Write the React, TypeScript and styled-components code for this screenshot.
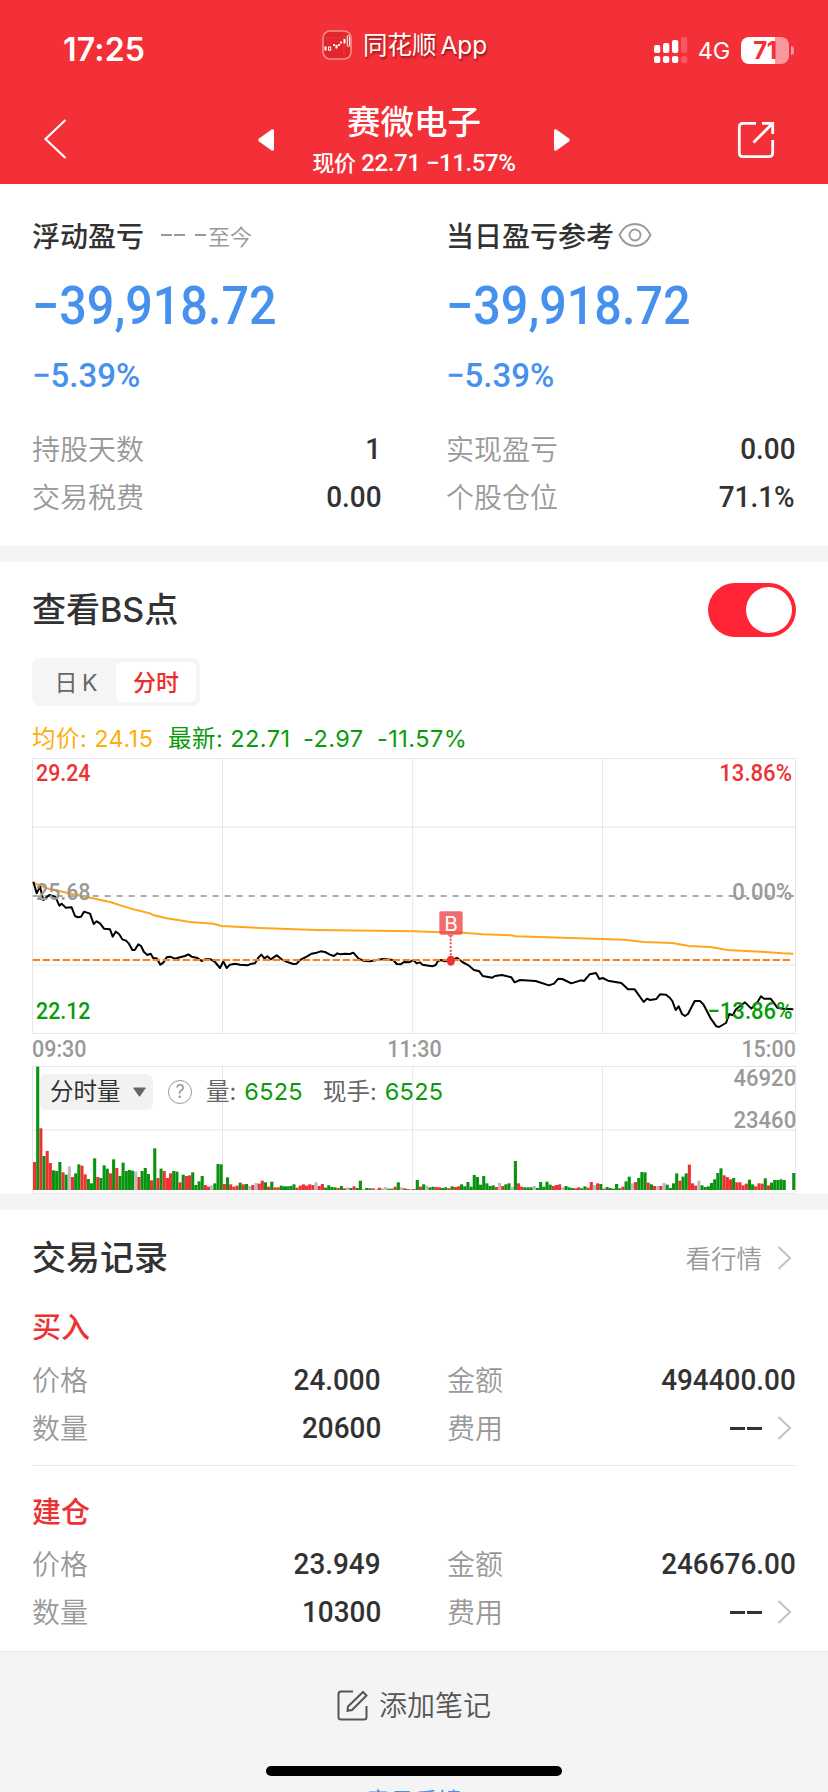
import React from 'react';
import styled, { createGlobalStyle, css } from 'styled-components';

const CJK = "'Noto Sans CJK SC', sans-serif";
const NUM = `Roboto, ${CJK}`;
const UI = `Inter, ${CJK}`;

const color = {
  brand: '#f33037',
  red: '#ec3232',
  green: '#0a9b0a',
  blue: '#4691ee',
  orange: '#ffa61a',
  ink: '#323232',
  mute: '#999999',
  line: '#e6e6e6',
  band: '#f4f4f4',
};

const GlobalStyle = createGlobalStyle`
  * { box-sizing: border-box; }
  body { margin: 0; background: #fff; overflow: hidden; }
`;

const Screen = styled.div`
  width: 828px;
  height: 1792px;
  overflow: hidden;
  position: relative;
  background: #fff;
  color: ${color.ink};
  font-family: ${CJK};
  display: flex;
  flex-direction: column;
  white-space: nowrap;
  line-height: 1;
`;

/* ---------- header ---------- */

const Header = styled.header`
  height: 184px;
  flex: none;
  background: ${color.brand};
  color: #fff;
`;

const StatusBar = styled.div`
  height: 96px;
  display: grid;
  grid-template-columns: 259px auto 1fr;
  padding: 0 34px 0 63px;
`;

const Clock = styled.div`
  font: 600 32px/100px ${UI};
  letter-spacing: 0.2px;
`;

const AppTag = styled.div`
  height: 90px;
  display: flex;
  align-items: center;
  gap: 11px;
  font: 400 24.5px/1 ${UI};
  text-shadow: 1px 2px 2px rgba(90, 0, 0, 0.6);
  word-spacing: -3px;
`;

const Signals = styled.div`
  height: 100px;
  display: flex;
  align-items: center;
  justify-content: flex-end;
`;

const Network = styled.span`
  font: 400 23.5px/1 ${UI};
  margin: 2px 11px 0 10px;
  letter-spacing: -0.2px;
`;

const Battery = styled.div`
  width: 48px;
  height: 27px;
  border-radius: 8px;
  background: linear-gradient(90deg, #fff 34px, #f9989b 34px);
  color: ${color.brand};
  font: 700 24px/27px ${UI};
  text-align: center;
  letter-spacing: -0.5px;
`;

const BatteryNub = styled.div`
  width: 3px;
  height: 9px;
  margin-left: 2px;
  border-radius: 0 4px 4px 0;
  background: #f9989b;
`;

const NavBar = styled.div`
  height: 88px;
  display: grid;
  grid-template-columns: 215px 16px 280px 16px 1fr;
  align-items: center;
  padding: 0 53px 0 43px;
`;

const NavIcon = styled.svg<{ $end?: boolean }>`
  display: block;
  justify-self: ${(p) => (p.$end ? 'end' : 'start')};
  fill: none;
  stroke: #fff;
`;

const Arrow = styled.svg`
  display: block;
  fill: #fff;
`;

const NavTitle = styled.div`
  text-align: center;
  padding-bottom: 4px;
`;

const StockName = styled.h1`
  margin: 0 0 4px;
  font: 500 33.5px/46px ${CJK};
`;

const StockQuote = styled.div`
  font: 500 24px/32px ${NUM};
  letter-spacing: -0.4px;
  span {
    font-size: 22px;
  }
`;

/* ---------- profit summary ---------- */

const Summary = styled.section`
  height: 362px;
  flex: none;
  padding: 29px 32px 0;
  display: grid;
  grid-template-columns: 349px 349px;
  column-gap: 65px;
`;

const CardHead = styled.div`
  height: 44px;
  display: flex;
  align-items: center;
  font-size: 28px;
  font-weight: 500;
`;

const Since = styled.span`
  margin-left: 17px;
  font: 350 22px/1 ${CJK};
  color: ${color.mute};
  display: flex;
  align-items: center;
`;

const Dash = styled.i<{ $w: number; $gap?: number; $h?: number; $c?: string }>`
  display: inline-block;
  width: ${(p) => p.$w}px;
  height: ${(p) => p.$h ?? 1.5}px;
  margin-right: ${(p) => p.$gap ?? 2}px;
  background: ${(p) => p.$c ?? color.mute};
`;

const Profit = styled.div`
  height: 98px;
  font: 500 53px/99px ${NUM};
  transform: scaleX(0.915);
  transform-origin: left;
  color: ${color.blue};
`;

const Rate = styled.div`
  height: 40px;
  font: 500 34px/40px ${NUM};
  transform: scaleX(0.97);
  transform-origin: left;
  color: ${color.blue};
`;

const Rows = styled.div`
  margin-top: 30px;
`;

const Row = styled.div`
  height: 48px;
  display: flex;
  align-items: center;
  justify-content: space-between;
`;

const Label = styled.span`
  font: 350 28px/46px ${CJK};
  height: 48px;
  color: ${color.mute};
`;

const Value = styled.span`
  display: flex;
  align-items: center;
`;

const Figure = styled.span`
  font: 500 30px/48px ${NUM};
  transform: scaleX(0.93);
  transform-origin: right;
`;

const Band = styled.div`
  height: 16px;
  flex: none;
  background: ${color.band};
`;

/* ---------- chart ---------- */

const ChartSection = styled.section`
  height: 632px;
  flex: none;
  padding: 0 32px;
`;

const SectionHead = styled.div`
  height: 96px;
  display: flex;
  align-items: center;
  justify-content: space-between;
`;

const SectionTitle = styled.h2`
  margin: 0;
  font: 500 34px/48px ${UI};
`;

const Toggle = styled.div`
  width: 88px;
  height: 54px;
  border-radius: 27px;
  background: #ff2436;
  padding: 4px;
  display: flex;
  justify-content: flex-end;
  &::after {
    content: '';
    width: 46px;
    height: 46px;
    border-radius: 50%;
    background: #fff;
  }
`;

const Tabs = styled.div`
  width: 168px;
  height: 48px;
  padding: 4px;
  border-radius: 8px;
  background: #f5f5f5;
  display: flex;
`;

const Tab = styled.div<{ $active?: boolean }>`
  width: 80px;
  height: 40px;
  border-radius: 6px;
  text-align: center;
  font: 400 23px/42px ${UI};
  color: #666;
  word-spacing: -2px;
  ${(p) =>
    p.$active &&
    css`
      background: #fff;
      color: #ec2c2c;
      font-weight: 500;
    `}
`;

const Legend = styled.div`
  height: 52px;
  padding-top: 16px;
  display: flex;
  font: 400 23.5px/34px ${UI};
  letter-spacing: 0.45px;
`;

const LegendItem = styled.span<{ $w: number; $c?: string }>`
  width: ${(p) => p.$w}px;
  color: ${(p) => p.$c ?? color.green};
`;

const Plot = styled.div<{ $h: number }>`
  position: relative;
  height: ${(p) => p.$h}px;
  svg {
    display: block;
  }
`;

const PlotLabel = styled.span<{ $y: number; $right?: boolean; $c: string; $inset?: number; $k?: number }>`
  position: absolute;
  top: ${(p) => p.$y}px;
  ${(p) => (p.$right ? 'right' : 'left')}: ${(p) => p.$inset ?? 4}px;
  font: 500 24px/24px ${NUM};
  transform: scaleX(${(p) => p.$k ?? 0.92});
  transform-origin: ${(p) => (p.$right ? 'right' : 'left')};
  color: ${(p) => p.$c};
`;

const TimeAxis = styled.div`
  height: 32px;
  display: flex;
  justify-content: space-between;
  font: 500 24px/31px ${NUM};
  color: ${color.mute};
`;

const Tick = styled.span<{ $origin: string }>`
  transform: scaleX(0.895);
  transform-origin: ${(p) => p.$origin};
`;

const VolumeBar = styled.div`
  position: absolute;
  left: 8px;
  top: 8px;
  height: 36px;
  display: flex;
  align-items: center;
  font: 400 23.5px/36px ${UI};
  color: #666;
`;

const Picker = styled.div`
  width: 113px;
  height: 36px;
  border-radius: 6px;
  background: #f2f2f2;
  color: #323232;
  padding-left: 10px;
  display: flex;
  align-items: center;
  gap: 12px;
`;

const Help = styled.div`
  width: 24px;
  height: 24px;
  margin: 0 14px 0 15px;
  border: 1.5px solid #999;
  border-radius: 50%;
  color: #999;
  font: 400 18px/21px ${UI};
  text-align: center;
`;

const Volume = styled.b<{ $gap?: number }>`
  font-weight: 400;
  letter-spacing: 0.3px;
  color: ${color.green};
  margin: 0 ${(p) => p.$gap ?? 0}px 0 8px;
`;

/* ---------- trades ---------- */

const Trades = styled.section`
  flex: none;
  padding: 0 32px;
  height: 441px;
`;

const More = styled.div`
  display: flex;
  align-items: center;
  font: 350 25.5px/1 ${CJK};
  color: ${color.mute};
`;

const Caption = styled.span`
  padding-bottom: 3px;
`;

const Trade = styled.div`
  height: 159px;
  & + & {
    height: 175px;
    border-top: 1px solid #e8e8e8;
  }
`;

const TradeKind = styled.h3<{ $h: number; $lh: number }>`
  margin: 0;
  height: ${(p) => p.$h}px;
  font: 500 29px/${(p) => p.$lh}px ${CJK};
  color: ${color.red};
`;

const TradeGrid = styled.div`
  display: grid;
  grid-template-columns: 349px 349px;
  column-gap: 66px;
`;

const Footer = styled.footer`
  height: 142px;
  flex: none;
  border-top: 1px solid #e8e8e8;
  background: ${color.band};
  display: flex;
  flex-direction: column;
  align-items: center;
`;

const AddNote = styled.div`
  height: 107px;
  flex: none;
  display: flex;
  align-items: center;
  gap: 11px;
  font: 350 28px/1 ${CJK};
  color: #555;
`;

const Feedback = styled.div`
  flex: none;
  margin-top: 29px;
  font: 400 24px/24px ${CJK};
  color: ${color.blue};
`;

const HomeIndicator = styled.div`
  position: absolute;
  left: 266px;
  bottom: 16px;
  width: 296px;
  height: 10px;
  border-radius: 5px;
  background: #000;
`;

/* ---------- data ---------- */

const pricePoints =
  '100,425 110,460 120,440 130,480 148,465 166,470 178,497 185,491 197,503 215,502 225,528 234,532 243,530 252,515 270,521 281,552 290,544 300,550 312,566 330,568 338,590 347,575 357,582 367,598 378,602 386,610 397,630 404,630 415,613 423,618 432,636 442,645 452,641 460,655 470,655 481,674 490,668 500,652 510,650 525,656 540,652 555,648 565,643 575,650 590,653 605,663 615,658 632,658 645,666 660,684 670,664 680,684 690,674 705,671 720,674 742,676 755,671 765,670 775,653 784,644 793,655 802,649 812,658 830,646 845,658 862,666 880,672 890,671 900,660 920,650 935,641 950,638 962,634 975,636 990,644 1002,648 1012,640 1022,643 1035,641 1050,642 1060,638 1075,655 1090,662 1110,664 1130,660 1150,657 1180,660 1190,672 1202,673 1212,666 1228,667 1240,660 1250,670 1260,667 1267,674 1297,679 1307,675 1314,663 1324,660 1334,664 1352,660 1372,654 1387,666 1407,677 1422,690 1438,694 1448,708 1477,713 1485,708 1506,705 1534,712 1544,727 1560,720 1607,723 1647,736 1662,731 1675,716 1687,717 1714,730 1742,721 1752,723 1769,703 1788,699 1798,717 1808,714 1824,722 1864,729 1884,748 1904,748 1931,786 1941,776 1950,780 1969,777 1980,763 1998,764 2010,774 2017,783 2027,810 2036,799 2046,822 2055,828 2064,822 2084,783 2100,783 2110,793 2132,835 2149,859 2157,861 2178,849 2188,822 2198,826 2208,808 2235,787 2254,806 2274,784 2283,769 2292,776 2312,776 2332,803 2347,806 2380,808';

const averagePoints =
  '100,428 140,445 200,458 260,471 330,486 400,508 450,520 462,526 500,535 570,546 640,551 665,558 800,565 950,570 1242,574 1322,577 1392,578 1447,583 1532,586 1547,589 1642,592 1807,597 1872,599 1932,606 2017,609 2067,618 2132,621 2182,630 2282,635 2347,640 2380,641';

// One entry per minute: direction (R up, G down, W flat) and height.
const volumes = (
  'R84 G370 R185 G102 R117 R81 G59 G57 G84 R53 G46 W71 R39 G50 G77 R73 R47 G33 G20 G95 R39 G36 G74 G64 R50 G92 R66 G42 G82 G57 G60 G58 W55 R39 G57 G66 G48 R29 G125 R36 ' +
  'G64 R57 R36 R50 G57 G55 R23 G46 R42 R44 G53 G15 G26 G42 R15 R10 W14 G20 G78 G77 R18 G38 R17 R10 R13 G22 R17 G18 W12 R15 W21 R19 R28 G23 R10 G25 R8 R8 G13 G11 ' +
  'G11 G12 G17 R7 R13 R17 R13 R17 R15 W23 R12 R18 G7 G14 G9 G8 R6 G12 R5 W8 G6 R11 G6 G28 W3 G6 G5 R5 W3 R7 W5 W9 G4 G4 R10 G23 W8 R5 G3 W3 ' +
  'R3 G30 R10 G17 W13 G8 G10 R9 R8 G6 G8 R5 G11 R9 R11 G17 G11 G24 G10 G45 G39 G16 G42 G20 G12 G14 R9 W21 R12 G17 G20 W9 G87 R20 R10 G8 G8 G8 W12 G6 ' +
  'G24 G10 G25 G16 R12 R15 R17 W8 G12 G8 G6 R5 R8 G5 G11 R7 R24 W15 R20 G18 R4 G9 G6 G4 G18 G5 R10 G26 G40 W20 R24 G36 G54 G53 R22 G17 R12 W12 R12 W21 ' +
  'G16 G6 G20 G50 R28 G40 G50 R76 R20 R13 W28 G14 G9 G11 G21 G32 G51 G65 R44 R39 R32 G36 R23 R23 R14 R19 G31 G17 R11 R20 R19 G35 R14 G22 G30 G30 G32 G30 W0 W0 G51'
)
  .split(' ')
  .map((v) => ({ kind: v[0], h: Number(v.slice(1)) }));

const barFill: Record<string, string> = { R: '#ec3232', G: '#0a9310', W: '#bababa' };

const trades = [
  { kind: '买入', price: '24.000', amount: '494400.00', qty: '20600' },
  { kind: '建仓', price: '23.949', amount: '246676.00', qty: '10300' },
];

/* ---------- pieces ---------- */

const Chevron = () => (
  <svg width="34" height="28" viewBox="0 0 34 28" fill="none" stroke="#c4c4c4" strokeWidth="2.2">
    <path d="M16.500 3L28 14L16.500 25" />
  </svg>
);

const NoFee = () => (
  <>
    <Dash $w={15} $h={3} $gap={2} $c={color.ink} />
    <Dash $w={15} $h={3} $gap={0} $c={color.ink} />
    <Chevron />
  </>
);

const Field = ({ label, value, children }: { label: string; value?: string; children?: React.ReactNode }) => (
  <Row>
    <Label>{label}</Label>
    <Value>{value ? <Figure>{value}</Figure> : children}</Value>
  </Row>
);

const PriceChart = () => (
  <Plot $h={276}>
    <svg width="764" height="276" viewBox="96 54 2292 828" fill="none">
      <path d="M98 261H2386M98 675H2386" stroke="#f2f2f2" strokeWidth="6" />
      <path d="M667.5 55V880M1238 55V880M1807.5 55V880" stroke={color.line} strokeWidth="3" />
      <rect x="97.5" y="55.5" width="2289" height="825" stroke={color.line} strokeWidth="3" />
      <path d="M98 468H2382" stroke="#aaa" strokeWidth="6" strokeDasharray="18 18" />
      <polyline points={averagePoints} stroke={color.orange} strokeWidth="6" />
      <polyline points={pricePoints} stroke="#000" strokeWidth="6" strokeLinejoin="round" />
      <path d="M98 660H2376" stroke="#ff7f1a" strokeWidth="6" strokeDasharray="22 8" />
      <rect x="1318" y="514" width="70" height="70" rx="6" fill="#ee3b3f" fillOpacity="0.75" />
      <path d="M1342 584H1362L1352 594Z" fill="#ee3b3f" fillOpacity="0.75" />
      <path d="M1352 596V650" stroke="#ec3232" strokeWidth="5" strokeDasharray="6 5" />
      <ellipse cx="1352.500" cy="662" rx="12.500" ry="15" fill="#ec3232" />
      <text x="1353" y="573" fontSize="62" fontFamily="Inter, sans-serif" fill="#fff" textAnchor="middle">
        B
      </text>
    </svg>
    <PlotLabel $y={3} $k={0.89} $c={color.red}>29.24</PlotLabel>
    <PlotLabel $y={122} $k={0.89} $c={color.mute}>25.68</PlotLabel>
    <PlotLabel $y={241} $k={0.89} $c={color.green}>22.12</PlotLabel>
    <PlotLabel $y={3} $right $c={color.red}>13.86%</PlotLabel>
    <PlotLabel $y={122} $right $c={color.mute}>0.00%</PlotLabel>
    <PlotLabel $y={241} $right $c={color.green}>−13.86%</PlotLabel>
  </Plot>
);

const VolumeChart = () => (
  <Plot $h={128}>
    <svg width="764" height="128" viewBox="96 108 2292 384" fill="none">
      <path d="M98 300H2386" stroke="#f2f2f2" strokeWidth="6" />
      <path d="M667.5 109V490M1238 109V490M1807.5 109V490" stroke={color.line} strokeWidth="3" />
      <rect x="97.5" y="109.500" width="2289" height="381" stroke={color.line} strokeWidth="3" />
      {volumes.map((v, i) => (
        <rect key={i} x={99 + i * 9.49} y={480 - v.h} width="9.3" height={v.h} fill={barFill[v.kind]} />
      ))}
    </svg>
    <VolumeBar>
      <Picker>
        分时量
        <svg width="13" height="10" viewBox="0 0 13 10" fill="#666">
          <path d="M1 0.500H12Q13 0.500 12.500 1.500L7.300 9Q6.500 10 5.700 9L0.500 1.500Q0 0.500 1 0.500Z" />
        </svg>
      </Picker>
      <Help>?</Help>
      量:<Volume $gap={20}>6525</Volume>
      现手:<Volume>6525</Volume>
    </VolumeBar>
    <PlotLabel $y={0} $right $inset={0} $c={color.mute}>46920</PlotLabel>
    <PlotLabel $y={42} $right $inset={0} $c={color.mute}>23460</PlotLabel>
  </Plot>
);

export default function App() {
  return (
    <Screen>
      <GlobalStyle />
      <Header>
        <StatusBar>
          <Clock>17:25</Clock>
          <AppTag>
            <svg width="30" height="30" viewBox="0 0 30 30" fill="none">
              <rect x="1" y="1" width="28" height="28" rx="7" fill="#e2262b" stroke="#f88f92" strokeWidth="1.6" />
              <path d="M1 8H29M22 2V28" stroke="#f0484c" strokeWidth="0.6" />
              <path d="M3.500 16.500V20.500M12 14V16M14.500 15V18.500M17 14V16M19 11.500V13.500M22.500 9V13.500" stroke="#fff" strokeWidth="2" />
              <rect x="6.500" y="17" width="2.200" height="3.200" stroke="#fff" />
              <rect x="25.300" y="5.500" width="2.200" height="11" rx="1" stroke="#fff" />
            </svg>
            <span>同花顺 App</span>
          </AppTag>
          <Signals>
            <svg width="34" height="26" viewBox="0 0 34 26" fill="#fff">
              <rect x="0" y="8" width="6.300" height="8" rx="2" />
              <rect x="9" y="6" width="6.300" height="10" rx="2" />
              <rect x="18" y="3" width="6.300" height="13" rx="2" />
              <rect x="27" y="0" width="6.300" height="16" rx="2" opacity="0.2" />
              <rect x="0" y="19" width="6.300" height="7" rx="2" />
              <rect x="9" y="19" width="6.300" height="7" rx="2" />
              <rect x="18" y="19" width="6.300" height="7" rx="2" />
              <rect x="27" y="19" width="6.300" height="7" rx="2" opacity="0.2" />
            </svg>
            <Network>4G</Network>
            <Battery>71</Battery>
            <BatteryNub />
          </Signals>
        </StatusBar>
        <NavBar>
          <NavIcon width="24" height="42" viewBox="0 0 24 42" strokeWidth="2.2">
            <path d="M22.500 1L2.500 20L22.500 39" />
          </NavIcon>
          <Arrow width="16" height="22" viewBox="0 0 16 22">
            <path d="M14 0.300Q16 -0.300 16 2V20Q16 22.300 14 21.700L1 12.500Q-0.500 11 1 9.500Z" />
          </Arrow>
          <NavTitle>
            <StockName>赛微电子</StockName>
            <StockQuote>
              <span>现价</span> 22.71 −11.57%
            </StockQuote>
          </NavTitle>
          <Arrow width="16" height="22" viewBox="0 0 16 22">
            <path d="M2 0.300Q0 -0.300 0 2V20Q0 22.300 2 21.700L15 12.500Q16.500 11 15 9.500Z" />
          </Arrow>
          <NavIcon $end width="38" height="38" viewBox="0 0 38 38" strokeWidth="2.800">
            <path d="M19 2.300H6Q2.300 2.300 2.300 6V32Q2.300 35.700 6 35.700H32Q35.700 35.700 35.700 32V19" />
            <path d="M25 2.300H35.700V13M35.500 2.500L16.500 21.500" />
          </NavIcon>
        </NavBar>
      </Header>

      <Summary>
        <div>
          <CardHead>
            浮动盈亏
            <Since>
              <Dash $w={11} />
              <Dash $w={11} $gap={10} />
              <Dash $w={11} />
              至今
            </Since>
          </CardHead>
          <Profit>−39,918.72</Profit>
          <Rate>−5.39%</Rate>
          <Rows>
            <Field label="持股天数" value="1" />
            <Field label="交易税费" value="0.00" />
          </Rows>
        </div>
        <div>
          <CardHead>
            当日盈亏参考
            <svg width="38" height="26" viewBox="-4 0 38 26" fill="none" stroke="#999" strokeWidth="1.800">
              <path d="M1.500 13C5 5.500 11 2 17 2S29 5.500 32.500 13C29 20.500 23 24 17 24S5 20.500 1.500 13Z" />
              <circle cx="17" cy="13" r="5.500" />
            </svg>
          </CardHead>
          <Profit>−39,918.72</Profit>
          <Rate>−5.39%</Rate>
          <Rows>
            <Field label="实现盈亏" value="0.00" />
            <Field label="个股仓位" value="71.1%" />
          </Rows>
        </div>
      </Summary>

      <Band />

      <ChartSection>
        <SectionHead>
          <SectionTitle>查看BS点</SectionTitle>
          <Toggle />
        </SectionHead>
        <Tabs>
          <Tab>日 K</Tab>
          <Tab $active>分时</Tab>
        </Tabs>
        <Legend>
          <LegendItem $w={136} $c="#ffae0d">均价: 24.15</LegendItem>
          <LegendItem $w={135}>最新: 22.71</LegendItem>
          <LegendItem $w={74}>-2.97</LegendItem>
          <LegendItem $w={100}>-11.57%</LegendItem>
        </Legend>
        <PriceChart />
        <TimeAxis>
          <Tick $origin="left">09:30</Tick>
          <Tick $origin="center">11:30</Tick>
          <Tick $origin="right">15:00</Tick>
        </TimeAxis>
        <VolumeChart />
      </ChartSection>

      <Band />

      <Trades>
        <SectionHead>
          <SectionTitle>交易记录</SectionTitle>
          <More>
            <Caption>看行情</Caption>
            <Chevron />
          </More>
        </SectionHead>
        {trades.map((t, i) => (
          <Trade key={t.kind}>
            <TradeKind $h={i > 0 ? 74 : 50} $lh={i > 0 ? 88 : 39}>
              {t.kind}
            </TradeKind>
            <TradeGrid>
              <Field label="价格" value={t.price} />
              <Field label="金额" value={t.amount} />
              <Field label="数量" value={t.qty} />
              <Field label="费用">
                <NoFee />
              </Field>
            </TradeGrid>
          </Trade>
        ))}
      </Trades>

      <Footer>
        <AddNote>
          <svg width="31" height="31" viewBox="0 0 31 31" fill="none" stroke="#555" strokeWidth="2">
            <path d="M16 1.500H4Q1.500 1.500 1.500 4V27Q1.500 29.500 4 29.500H27Q29.500 29.500 29.500 27V16" />
            <path d="M26 2L29.500 5.500L15 20L10.500 20.800L11 16.500Z" />
          </svg>
          <Caption>添加笔记</Caption>
        </AddNote>
        <Feedback>意见反馈</Feedback>
      </Footer>
      <HomeIndicator />
    </Screen>
  );
}
